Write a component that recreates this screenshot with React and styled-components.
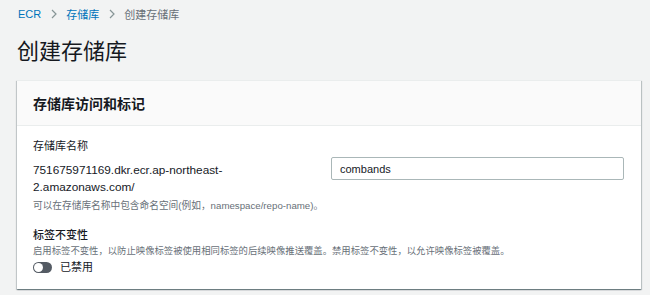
import React from "react";
import styled, { createGlobalStyle } from "styled-components";

const Global = createGlobalStyle`
  html, body { margin: 0; padding: 0; background: #f2f3f3; }
  body {
    font-family: "Liberation Sans", "Noto Sans CJK SC", sans-serif;
    color: #16191f;
    -webkit-font-smoothing: antialiased;
  }
`;

const Page = styled.div`
  width: 650px;
  height: 295px;
  box-sizing: border-box;
  padding: 6px 9px 0 17px;
  overflow: hidden;
`;

const Crumbs = styled.nav`
  display: flex;
  align-items: center;
  height: 16px;
  padding-left: 1px;
  font-size: 11px;
`;

const Crumb = styled.span`
  color: ${(p) => (p.$link ? "#0073bb" : "#687078")};
`;

const Sep = styled.span`
  display: flex;
  align-items: center;
  margin: 0 9px 0 10px;
`;

const Title = styled.h1`
  margin: 17px 0 0 0;
  font-size: 22px;
  font-weight: 400;
  line-height: 26px;
  height: 26px;
`;

const Card = styled.section`
  margin-top: 15px;
  background: #fff;
  box-shadow: 0 1px 1px 0 rgba(0, 28, 36, 0.35), 1px 1px 1px 0 rgba(0, 28, 36, 0.18),
    -1px 1px 1px 0 rgba(0, 28, 36, 0.15);
  border-top: 1px solid #eaeded;
`;

const CardHeader = styled.header`
  background: #fafafa;
  border-bottom: 1px solid #eaeded;
  height: 44px;
  display: flex;
  align-items: center;
  padding: 0 16px;
  font-size: 14px;
  font-weight: 700;
`;

const CardBody = styled.div`
  padding: 12px 17px 14px 16px;
`;

const Label = styled.div`
  font-size: 11px;
  line-height: 16px;
  font-weight: ${(p) => (p.$strong ? 500 : 400)};
`;

const Row = styled.div`
  display: grid;
  grid-template-columns: 1fr 293px;
  column-gap: 19px;
  align-items: start;
  margin-top: 8px;
`;

const Uri = styled.div`
  font-size: 11.8px;
  line-height: 17px;
`;

const Input = styled.div`
  height: 23px;
  box-sizing: border-box;
  border: 1px solid #aab7b8;
  border-radius: 2px;
  display: flex;
  align-items: center;
  padding-left: 8px;
  font-size: 11px;
  margin-top: -5px;
`;

const Hint = styled.div`
  margin-top: 3px;
  font-size: 9.7px;
  line-height: 14px;
  color: #687078;
`;

const Section = styled.div`
  margin-top: 14px;
`;

const Desc = styled.div`
  margin-top: 1px;
  font-size: 9.35px;
  line-height: 14px;
  color: #687078;
`;

const ToggleRow = styled.div`
  display: flex;
  align-items: center;
  margin-top: 1px;
  gap: 8px;
  font-size: 11px;
  line-height: 16px;
`;

const Track = styled.span`
  position: relative;
  display: inline-block;
  width: 19px;
  height: 11px;
  border-radius: 6px;
  background: #545b64;
`;

const Knob = styled.span`
  position: absolute;
  left: 1px;
  top: 1px;
  width: 9px;
  height: 9px;
  border-radius: 50%;
  background: #fff;
`;

const Chevron = () => (
  <svg width="6" height="10" viewBox="0 0 6 10">
    <path d="M1 1l4 4-4 4" fill="none" stroke="#879596" strokeWidth="1.2" />
  </svg>
);

export default function App() {
  return (
    <Page>
      <Global />
      <Crumbs>
        <Crumb $link>ECR</Crumb>
        <Sep><Chevron /></Sep>
        <Crumb $link>存储库</Crumb>
        <Sep><Chevron /></Sep>
        <Crumb>创建存储库</Crumb>
      </Crumbs>
      <Title>创建存储库</Title>
      <Card>
        <CardHeader>存储库访问和标记</CardHeader>
        <CardBody>
          <Label>存储库名称</Label>
          <Row>
            <Uri>751675971169.dkr.ecr.ap-northeast-2.amazonaws.com/</Uri>
            <Input>combands</Input>
          </Row>
          <Hint>可以在存储库名称中包含命名空间(例如，namespace/repo-name)。</Hint>
          <Section>
            <Label $strong>标签不变性</Label>
            <Desc>启用标签不变性，以防止映像标签被使用相同标签的后续映像推送覆盖。禁用标签不变性，以允许映像标签被覆盖。</Desc>
            <ToggleRow>
              <Track><Knob /></Track>
              已禁用
            </ToggleRow>
          </Section>
        </CardBody>
      </Card>
    </Page>
  );
}
